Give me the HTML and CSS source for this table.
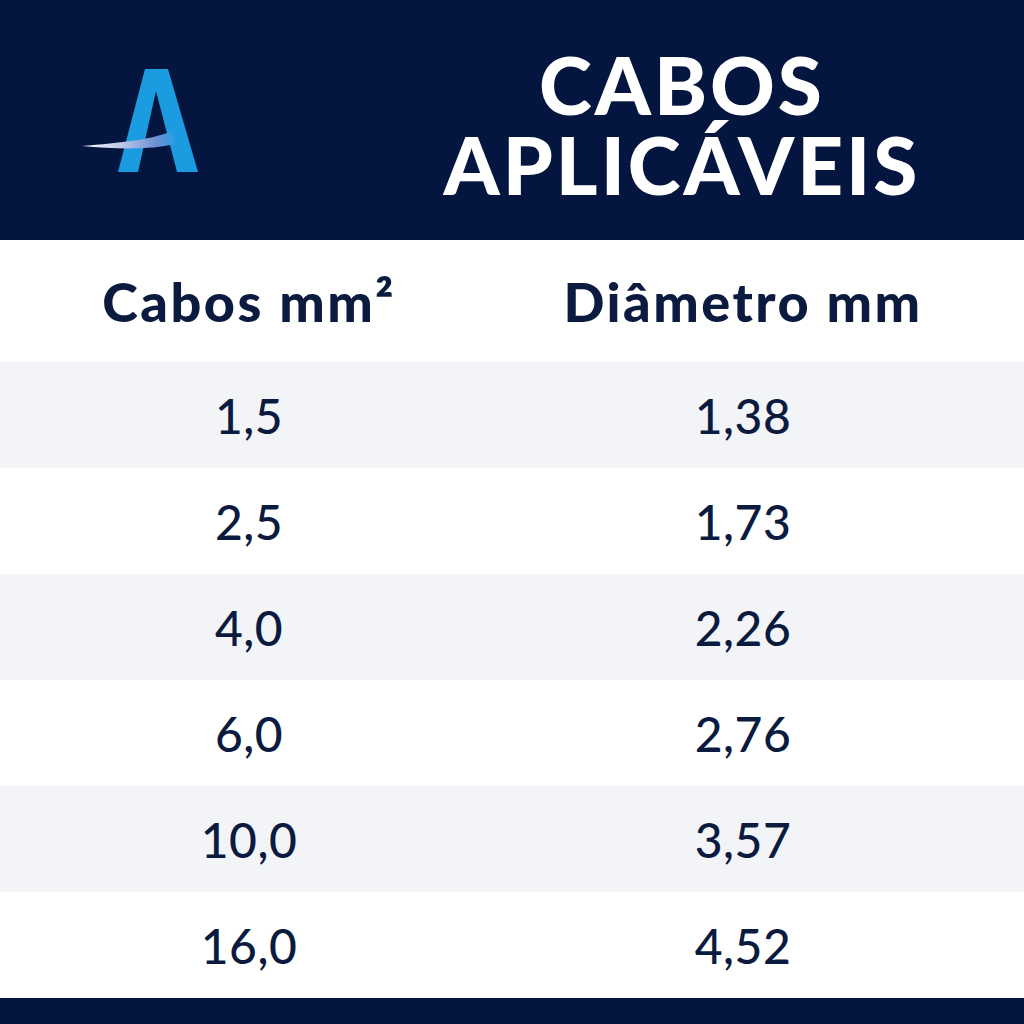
FILE: index.html
```html
<!DOCTYPE html>
<html lang="pt">
<head>
<meta charset="utf-8">
<link rel="stylesheet" href="styles.css">
</head>
<body>
<div class="page">
  <header class="top">
    <div class="logo">
      <svg width="130" height="110" viewBox="0 0 130 110">
        <defs>
          <linearGradient id="sw" x1="0" y1="0" x2="1" y2="0">
            <stop offset="0" stop-color="#ffffff"/>
            <stop offset="0.45" stop-color="#b8c4e6"/>
            <stop offset="0.8" stop-color="#6d8fd4"/>
            <stop offset="1" stop-color="#2b9ee0"/>
          </linearGradient>
        </defs>
        <path d="M38 103 L65 0 L88 0 L118 103 L97 103 L76 22 L58 103 Z" fill="#1b9be0"/>
        <path d="M2 77 C40 74 75 70 92 62 L95 75 C70 81 35 80 2 77 Z" fill="url(#sw)"/>
      </svg>
    </div>
    <h1 class="title"><span class="line">CABOS</span><span class="line second">APLICÁVEIS</span></h1>
  </header>
  <div class="table">
    <div class="row head">
      <div class="cell">Cabos mm²</div>
      <div class="cell">Diâmetro mm</div>
    </div>
    <div class="row alt"><div class="cell">1,5</div><div class="cell">1,38</div></div>
    <div class="row"><div class="cell">2,5</div><div class="cell">1,73</div></div>
    <div class="row alt"><div class="cell">4,0</div><div class="cell">2,26</div></div>
    <div class="row"><div class="cell">6,0</div><div class="cell">2,76</div></div>
    <div class="row alt"><div class="cell">10,0</div><div class="cell">3,57</div></div>
    <div class="row"><div class="cell">16,0</div><div class="cell">4,52</div></div>
  </div>
  <footer class="bottom"></footer>
</div>
</body>
</html>
```

FILE: styles.css
```css
* { box-sizing: border-box; margin: 0; padding: 0; }
html, body { width: 1024px; height: 1024px; overflow: hidden; background: #ffffff; }
body { font-family: Lato, "Noto Sans", sans-serif; color: #0b1a3f; }
.page { display: flex; flex-direction: column; height: 1024px; }
.top {
  height: 240px;
  background: #04163f;
  display: flex;
  align-items: center;
}
.logo { width: 350px; padding-left: 80px; padding-top: 8px; display: flex; }
.title {
  flex: 1;
  display: flex;
  flex-direction: column;
  align-items: center;
  color: #ffffff;
  font-family: Lato, sans-serif;
  font-weight: 900;
  font-size: 80px;
  line-height: 68px;
  letter-spacing: 3px;
  padding-right: 10px;
  padding-top: 8px;
}
.line { display: block; }
.line.second { margin-top: 12px; }
.table { display: flex; flex-direction: column; }
.row {
  display: grid;
  grid-template-columns: 498px 490px;
  height: 106px;
  align-items: center;
  background: #ffffff;
}
.row.alt { background: #f3f4f7; }
.row.head { height: 122px; }
.cell {
  text-align: center;
  font-size: 48px;
  font-weight: 500;
  letter-spacing: 0.5px;
  color: #0b1a3f;
}
.row.head .cell { font-size: 54px; font-weight: 900; letter-spacing: 2.5px; }
.bottom { flex: 1; background: #04163f; }
```
